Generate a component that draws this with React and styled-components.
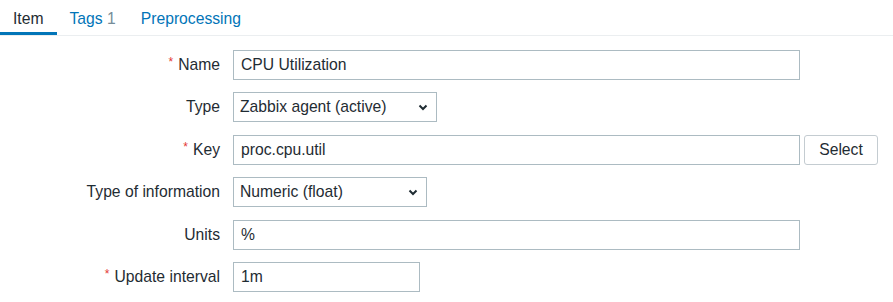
import React from "react";
import styled, { createGlobalStyle } from "styled-components";

const GlobalStyle = createGlobalStyle`
  body {
    margin: 0;
    background: #ffffff;
    font-family: "Liberation Sans", Arial, sans-serif;
    color: #1f2c33;
  }
`;

const Page = styled.div`
  width: 893px;
  font-size: 15.7px;
`;

const TabList = styled.div`
  display: flex;
  border-bottom: 1px solid #ebeef0;
`;

const Tab = styled.div`
  box-sizing: border-box;
  height: 35px;
  padding: 10px 13px 0;
  line-height: 18px;
  color: ${(p) => (p.active ? "#1f2c33" : "#0275b8")};
  border-bottom: 3px solid ${(p) => (p.active ? "#0275b8" : "transparent")};
  margin-right: ${(p) => (p.active ? "0" : "-1px")};
  white-space: nowrap;
`;

const Count = styled.span`
  color: #768d99;
`;

const Form = styled.div`
  display: grid;
  grid-template-columns: 220px 1fr;
  grid-auto-rows: 30px;
  column-gap: 13px;
  row-gap: 12.4px;
  align-items: center;
  padding-top: 14px;
`;

const Label = styled.div`
  display: flex;
  justify-content: flex-end;
  align-items: center;
  height: 30px;
  line-height: 18px;
  white-space: nowrap;
`;

const Star = styled.span`
  color: #e33734;
  font-size: 12px;
  line-height: 0;
  position: relative;
  top: -3px;
  margin-right: 5px;
`;

const Field = styled.div`
  display: flex;
  align-items: center;
  gap: 4px;
`;

const Input = styled.div`
  box-sizing: border-box;
  width: ${(p) => p.w}px;
  height: 30px;
  border: 1px solid #acbbc2;
  padding: 0 7px;
  line-height: 28px;
  white-space: nowrap;
`;

const Select = styled(Input)`
  display: flex;
  align-items: center;
  justify-content: space-between;
  padding: 0 6px 0 6px;
`;

const Button = styled.div`
  box-sizing: border-box;
  height: 30px;
  width: 74px;
  border: 1px solid #c4ccd1;
  border-radius: 3px;
  text-align: center;
  line-height: 28px;
`;

const Chevron = () => (
  <svg width="10" height="7" viewBox="0 0 10 7" style={{ marginRight: 2 }}>
    <path d="M1.5 1.5 L5 5 L8.5 1.5" fill="none" stroke="#1f2c33" strokeWidth="2" />
  </svg>
);

function Row({ label, required, children }) {
  return (
    <>
      <Label>
        {required && <Star>*</Star>}
        {label}
      </Label>
      <Field>{children}</Field>
    </>
  );
}

export default function App() {
  return (
    <Page>
      <GlobalStyle />
      <TabList>
        <Tab active>Item</Tab>
        <Tab>
          Tags <Count>1</Count>
        </Tab>
        <Tab>Preprocessing</Tab>
      </TabList>
      <Form>
        <Row label="Name" required>
          <Input w={567}>CPU Utilization</Input>
        </Row>
        <Row label="Type">
          <Select w={204}>
            Zabbix agent (active)
            <Chevron />
          </Select>
        </Row>
        <Row label="Key" required>
          <Input w={567}>proc.cpu.util</Input>
          <Button>Select</Button>
        </Row>
        <Row label="Type of information">
          <Select w={194}>
            Numeric (float)
            <Chevron />
          </Select>
        </Row>
        <Row label="Units">
          <Input w={567}>%</Input>
        </Row>
        <Row label="Update interval" required>
          <Input w={187}>1m</Input>
        </Row>
      </Form>
    </Page>
  );
}
